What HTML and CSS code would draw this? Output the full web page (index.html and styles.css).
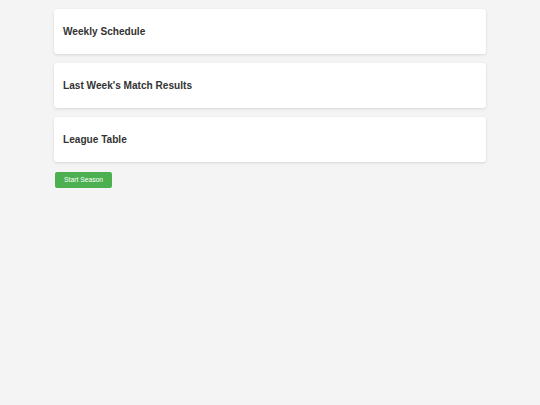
FILE: index.html
```html
<!DOCTYPE html>
<html>
<head>
<meta charset="utf-8">
<link rel="stylesheet" href="styles.css">
</head>
<body>
<div class="container">
  <section class="card"><h2 class="card-title">Weekly Schedule</h2></section>
  <section class="card"><h2 class="card-title">Last Week's Match Results</h2></section>
  <section class="card"><h2 class="card-title">League Table</h2></section>
  <button class="btn">Start Season</button>
</div>
</body>
</html>
```
FILE: styles.css
```css
html, body {
  margin: 0;
  padding: 0;
  background: #f4f4f4;
  font-family: "Liberation Sans", Arial, sans-serif;
}
.container {
  width: 432px;
  margin: 0 auto;
  padding-top: 9px;
  display: flex;
  flex-direction: column;
  align-items: flex-start;
}
.card {
  box-sizing: border-box;
  width: 100%;
  height: 45px;
  background: #fff;
  border-radius: 3px;
  box-shadow: 0 1px 3px rgba(0,0,0,0.12);
  padding: 0 9px;
  display: flex;
  align-items: center;
  margin-bottom: 9px;
}
.card-title {
  margin: 0;
  font-size: 10.1px;
  font-weight: bold;
  color: #333;
  line-height: 13px;
}
.btn {
  margin-top: 1px;
  margin-left: 1px;
  height: 16px;
  padding: 0 9px;
  background: #4caf50;
  color: #fff;
  border: none;
  border-radius: 2px;
  font-family: "Liberation Sans", Arial, sans-serif;
  font-size: 6.75px;
  line-height: 16px;
}
```
